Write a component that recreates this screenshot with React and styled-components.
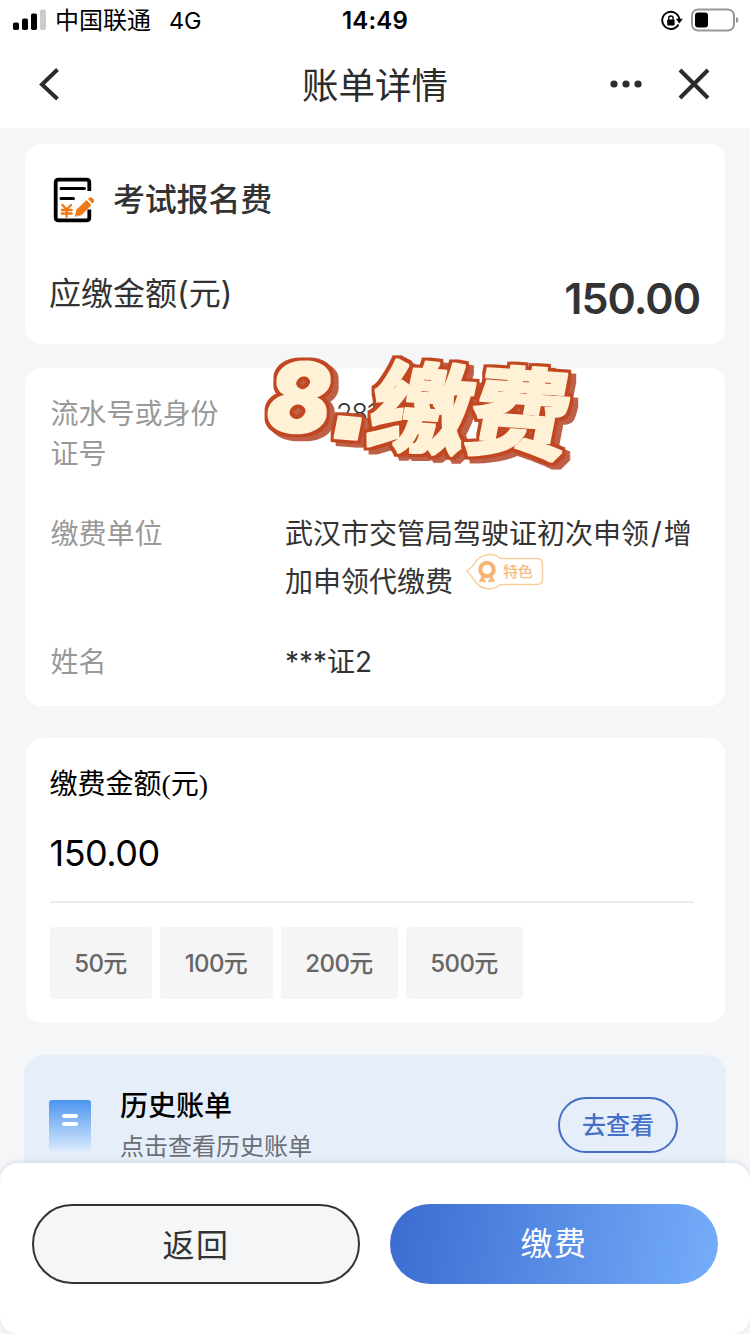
import React from "react";
import styled, { createGlobalStyle } from "styled-components";

const Global = createGlobalStyle`
  * { box-sizing: border-box; }
  body { margin: 0; background: #f4f6f8; }
  button { font-family: inherit; padding: 0; border: 0; cursor: pointer; }
`;

const Screen = styled.div`
  width: 750px;
  height: 1334px;
  display: flex;
  flex-direction: column;
  overflow: hidden;
  background: #f4f6f8;
  font-family: Inter, "Noto Sans CJK SC", sans-serif;
  color: #333;
`;

const StatusBar = styled.div`
  height: 40px;
  flex: none;
  display: grid;
  grid-template-columns: 1fr auto 1fr;
  align-items: center;
  padding: 0 11px 0 13px;
  background: #fff;
  color: #000;
  font-size: 24px;
  line-height: 38px;
`;

const Carrier = styled.div`
  display: flex;
  align-items: center;
  padding-top: 2px;
  svg { margin: -2px 9px 0 0; }
`;

const Network = styled.span`
  margin-left: 18px;
  font-size: 23.5px;
  letter-spacing: -0.3px;
`;

const Clock = styled.div`
  padding: 2px 2px 0 0;
  font-weight: 600;
  font-size: 24px;
  letter-spacing: 0.2px;
`;

const StatusIcons = styled.div`
  display: flex;
  justify-content: flex-end;
  align-items: center;
  gap: 8px;
`;

const NavBar = styled.header`
  height: 88px;
  flex: none;
  display: grid;
  grid-template-columns: 1fr auto 1fr;
  align-items: center;
  padding: 0 38px 0 37px;
  background: #fff;
  svg { display: block; }
`;

const Title = styled.h1`
  margin: 0;
  padding: 4px 0 0 1px;
  font-size: 36.5px;
  font-weight: 400;
  line-height: 84px;
  color: #2b2b2b;
`;

const NavActions = styled.div`
  display: flex;
  justify-content: flex-end;
  align-items: center;
  gap: 36px;
`;

const Content = styled.main`
  flex: 1;
  min-height: 0;
  overflow: hidden;
  padding: 16px 25px 0;
`;

const Card = styled.section`
  height: ${(p) => p.$height}px;
  margin-bottom: ${(p) => p.$gap}px;
  border-radius: 16px;
  background: #fff;
`;

const FeeHead = styled.div`
  display: flex;
  align-items: center;
  padding: 32px 25px 0 27px;
  height: 80px;
  gap: 17px;
`;

const FeeName = styled.h2`
  margin: 0;
  font-size: 32px;
  font-weight: 500;
  line-height: 48px;
  letter-spacing: -0.2px;
  color: #333;
`;

const DueRow = styled.div`
  display: flex;
  justify-content: space-between;
  padding: 45px 25px 0 24px;
`;

const DueLabel = styled.span`
  font-size: 32px;
  line-height: 50px;
`;

const DueAmount = styled.span`
  font-size: 43px;
  font-weight: 600;
  line-height: 58px;
  letter-spacing: -1px;
`;

const Detail = styled.div`
  display: grid;
  grid-template-columns: 175px 1fr;
  column-gap: 60px;
  padding: ${(p) => p.$top}px 20px 0 25px;
`;

const DetailLabel = styled.span`
  padding-left: 0.5px;
  font-size: 28px;
  line-height: 40px;
  color: #999;
`;

const DetailValue = styled.span`
  position: relative;
  font-size: 28px;
  line-height: 48px;
  margin-top: -4px;
`;

const Slash = styled.span`
  padding: 0 2px 0 2px;
  font-size: 30px;
  line-height: 1;
`;

const Masked = styled.span`
  display: block;
  padding-left: 51px;
  font-size: 27px;
  font-weight: 300;
  line-height: 48px;
  letter-spacing: -1px;
`;

const Sticker = styled.svg`
  position: absolute;
  left: -28px;
  top: -40px;
  font-family: "Noto Sans CJK SC", sans-serif;
  font-weight: 900;
`;

const Feature = styled.svg`
  display: inline-block;
  vertical-align: 2px;
  margin: -10px 0 0 12px;
`;

const PayCard = styled(Card)`
  margin-left: 1px;
  padding: 27px 31px 0 23.5px;
`;

const PayLabel = styled.div`
  font-family: "Liberation Serif", "Noto Sans CJK SC", serif;
  font-size: 28px;
  line-height: 40px;
  color: #000;
`;

const PayAmount = styled.div`
  height: 98px;
  padding-top: 23px;
  border-bottom: 2px solid #ececec;
  font-size: 36px;
  line-height: 50px;
  color: #000;
  letter-spacing: -0.5px;
`;

const Chips = styled.div`
  display: flex;
  gap: 8px;
  margin: 24px 0 0 0.5px;
`;

const Chip = styled.button`
  width: ${(p) => p.$width}px;
  height: 72px;
  padding: 0 1px 4px 0;
  border-radius: 4px;
  background: #f5f5f5;
  color: #666;
  font-size: 24px;
  font-weight: 500;
  letter-spacing: -0.6px;
`;

const History = styled.section`
  display: flex;
  align-items: flex-start;
  height: 140px;
  margin: 0 -1px;
  padding: 32px 48px 0 25px;
  border-radius: 20px;
  background: #e6eef9;
`;

const HistoryIcon = styled.div`
  width: 42px;
  height: 51px;
  margin-top: 13px;
  border-radius: 3px;
  background: linear-gradient(#4c95ef, #d9eafd);
  display: flex;
  flex-direction: column;
  align-items: center;
  padding-top: 14px;
  gap: 4px;
`;

const Dash = styled.i`
  width: 16px;
  height: 4px;
  border-radius: 2px;
  background: #fff;
`;

const HistoryText = styled.div`
  flex: 1;
  margin-left: 29px;
`;

const HistoryTitle = styled.div`
  font-size: 28px;
  font-weight: 500;
  line-height: 38px;
  color: #000;
`;

const HistoryHint = styled.div`
  font-size: 24px;
  line-height: 36px;
  margin-top: 4px;
  color: #6b6f75;
`;

const ViewButton = styled.button`
  width: 120px;
  height: 56px;
  margin-top: 10px;
  padding-bottom: 3px;
  border: 2px solid #466fc4;
  border-radius: 28px;
  background: transparent;
  color: #4570c8;
  font-size: 24px;
  font-weight: 500;
`;

const Footer = styled.footer`
  position: relative;
  flex: none;
  height: 171px;
  margin-top: -24px;
  display: flex;
  gap: 30px;
  padding: 41px 32px 0;
  border-radius: 18px;
  background: #fff;
  box-shadow: 0 -1px 5px rgba(60, 80, 110, 0.16);
`;

const Action = styled.button`
  width: 328px;
  height: 80px;
  padding-bottom: ${(p) => (p.$primary ? 6 : 2)}px;
  border-radius: 40px;
  font-size: 32px;
  letter-spacing: 1.5px;
  border: ${(p) => (p.$primary ? "0" : "2px solid #333")};
  color: ${(p) => (p.$primary ? "#fff" : "#333")};
  background: ${(p) => (p.$primary ? "linear-gradient(100deg, #3b6bd0, #75aefa)" : "#f4f6f8")};
`;

function Signal() {
  return (
    <svg width="33" height="22" viewBox="0 0 33 22">
      <rect x="0" y="13.5" width="6" height="7.5" rx="1.8" />
      <rect x="9" y="9.5" width="6" height="11.5" rx="1.8" />
      <rect x="18" y="4.5" width="6" height="16.5" rx="1.8" />
      <rect x="27" y="0.5" width="6" height="20.5" rx="1.8" fill="#ccc" />
    </svg>
  );
}

function RotationLock() {
  return (
    <svg width="22" height="22" viewBox="0 0 22 22">
      <path d="M17.4 15.5A8.6 8.6 0 1 1 18.3 10" fill="none" stroke="#000" strokeWidth="1.9" />
      <path d="M14.8 9.7H21.8L18.4 14.6Z" />
      <rect x="6.2" y="10.5" width="7.4" height="6" rx="0.8" />
      <path d="M7.7 11V9.2a2.2 2.2 0 0 1 4.4 0V11" fill="none" stroke="#000" strokeWidth="1.3" />
    </svg>
  );
}

function Battery() {
  return (
    <svg width="48" height="24" viewBox="0 0 48 24">
      <rect x="1" y="1.5" width="42" height="21" rx="6" fill="#fff" stroke="#999" strokeWidth="2" />
      <rect x="4" y="4.5" width="13" height="15" rx="3" />
      <path d="M45 9Q47.5 9.5 47.5 12T45 15Z" fill="#999" />
    </svg>
  );
}

function FeeIcon() {
  return (
    <svg width="44" height="48" viewBox="0 0 44 48" fill="none" strokeLinecap="round" strokeLinejoin="round">
      <path d="M37.3 15V6.5Q37.3 3.7 34.5 3.7H6.5Q3.7 3.7 3.7 6.5V41.5Q3.7 44.3 6.5 44.3H34.5Q37.3 44.3 37.3 41.5V33.5" stroke="#000" strokeWidth="3.8" strokeLinecap="butt" />
      <path d="M9 12.5H32.5M9 22.5H21.5" stroke="#000" strokeWidth="3" />
      <path d="M10.5 29L14.7 33.5L19 29M9.8 34H19.6M9.8 37.5H19.6M14.7 34V40.5" stroke="#ee7a16" strokeWidth="2.4" />
      <path d="M23.5 40L24.7 33.8L34.5 24.5L39 29L29.8 38.5Z" fill="#ee7a16" stroke="#ee7a16" strokeWidth="0.8" />
      <path d="M36 23L37.3 21.8Q38.6 20.7 39.9 21.8L41.6 23.5Q42.8 25 41.6 26.3L40.4 27.5Z" fill="#ee7a16" />
    </svg>
  );
}

const glyphs = [
  { text: "8", size: 96, family: "Inter", at: "translate(5 80) rotate(4) skewX(-7) scale(0.97 1.01)" },
  { text: ".", size: 140, family: "Liberation Sans", at: "translate(67 87) rotate(5) skewX(-6) scale(1.12 1.05)" },
  { text: "缴", size: 98, at: "translate(106 91) rotate(4) skewX(-8) scale(1.04 1)" },
  { text: "费", size: 98, at: "translate(205 96) rotate(4) skewX(-7) scale(1.04 1)" },
];

function StepSticker() {
  return (
    <Sticker width="340" height="130" viewBox="0 0 340 130" overflow="visible">
      <defs>
        <filter id="block-letters" filterUnits="userSpaceOnUse" x="-20" y="-20" width="380" height="170" colorInterpolationFilters="sRGB">
          <feMorphology in="SourceAlpha" operator="dilate" radius="1.2" result="body" />
          <feMorphology in="SourceAlpha" operator="dilate" radius="3.6" result="edge" />
          <feOffset in="edge" dx="5" dy="4" result="cast" />
          <feFlood floodColor="#bd6047" />
          <feComposite in2="cast" operator="in" result="shadow" />
          <feFlood floodColor="#c2461f" />
          <feComposite in2="edge" operator="in" result="outline" />
          <feFlood floodColor="#fff1d6" />
          <feComposite in2="body" operator="in" result="face" />
          <feMerge>
            <feMergeNode in="shadow" />
            <feMergeNode in="outline" />
            <feMergeNode in="face" />
          </feMerge>
        </filter>
      </defs>
      {glyphs.map((g) => (
        <g key={g.text} filter="url(#block-letters)">
          <text transform={g.at} fontSize={g.size} fontFamily={g.family}>{g.text}</text>
        </g>
      ))}
    </Sticker>
  );
}

function FeatureBadge() {
  return (
    <Feature width="80" height="38" viewBox="0 0 80 38" fill="none">
      <path d="M35.5 6.5H72Q77.5 6.5 77.5 12V27Q77.5 32.5 72 32.5H35.5A17.2 17.2 0 0 1 9.5 28.5Q6.5 23.5 1.5 19Q7.5 15.5 10.5 10A17.2 17.2 0 0 1 35.5 6.5Z" fill="#fff" stroke="#fbcf9f" strokeWidth="1.5" />
      <path d="M18 24L16 28.5L18.5 28L20 30M26 24L28 28.5L25.5 28L24 30" stroke="#f6b273" strokeWidth="2.5" />
      <circle cx="22" cy="17.5" r="6.7" stroke="#f6b273" strokeWidth="4" />
      <text x="38" y="25" fontSize="15" fontWeight="500" fill="#f7ba83">特色</text>
    </Feature>
  );
}

const amounts = [
  ["50元", 102],
  ["100元", 113],
  ["200元", 117],
  ["500元", 117],
];

export default function App() {
  return (
    <Screen>
      <Global />
      <StatusBar>
        <Carrier><Signal />中国联通<Network>4G</Network></Carrier>
        <Clock>14:49</Clock>
        <StatusIcons><RotationLock /><Battery /></StatusIcons>
      </StatusBar>
      <NavBar>
        <svg width="24" height="34" viewBox="0 0 24 34" fill="none" stroke="#2b2b2b" strokeWidth="4">
          <path d="M20.5 2.5L5 17.5L20.5 32" />
        </svg>
        <Title>账单详情</Title>
        <NavActions>
          <svg width="32" height="8" viewBox="0 0 32 8" fill="#2b2b2b">
            <circle cx="4" cy="4" r="3.6" /><circle cx="16" cy="4" r="3.6" /><circle cx="28" cy="4" r="3.6" />
          </svg>
          <svg width="34" height="34" viewBox="0 0 34 34" stroke="#2b2b2b" strokeWidth="4">
            <path d="M2 3L30 31M30 3L2 31" />
          </svg>
        </NavActions>
      </NavBar>
      <Content>
        <Card $height={200} $gap={24}>
          <FeeHead><FeeIcon /><FeeName>考试报名费</FeeName></FeeHead>
          <DueRow><DueLabel>应缴金额(元)</DueLabel><DueAmount>150.00</DueAmount></DueRow>
        </Card>
        <Card $height={338} $gap={32}>
          <Detail $top={26}>
            <DetailLabel>流水号或身份证号</DetailLabel>
            <DetailValue><Masked>281</Masked><StepSticker /></DetailValue>
          </Detail>
          <Detail $top={40}>
            <DetailLabel>缴费单位</DetailLabel>
            <DetailValue>武汉市交管局驾驶证初次申领<Slash>/</Slash>增加申领代缴费<FeatureBadge /></DetailValue>
          </Detail>
          <Detail $top={36}>
            <DetailLabel>姓名</DetailLabel>
            <DetailValue>***证2</DetailValue>
          </Detail>
        </Card>
        <PayCard $height={285} $gap={32}>
          <PayLabel>缴费金额(元)</PayLabel>
          <PayAmount>150.00</PayAmount>
          <Chips>
            {amounts.map(([label, width]) => <Chip key={label} $width={width}>{label}</Chip>)}
          </Chips>
        </PayCard>
        <History>
          <HistoryIcon><Dash /><Dash /></HistoryIcon>
          <HistoryText>
            <HistoryTitle>历史账单</HistoryTitle>
            <HistoryHint>点击查看历史账单</HistoryHint>
          </HistoryText>
          <ViewButton>去查看</ViewButton>
        </History>
      </Content>
      <Footer>
        <Action>返回</Action>
        <Action $primary>缴费</Action>
      </Footer>
    </Screen>
  );
}
